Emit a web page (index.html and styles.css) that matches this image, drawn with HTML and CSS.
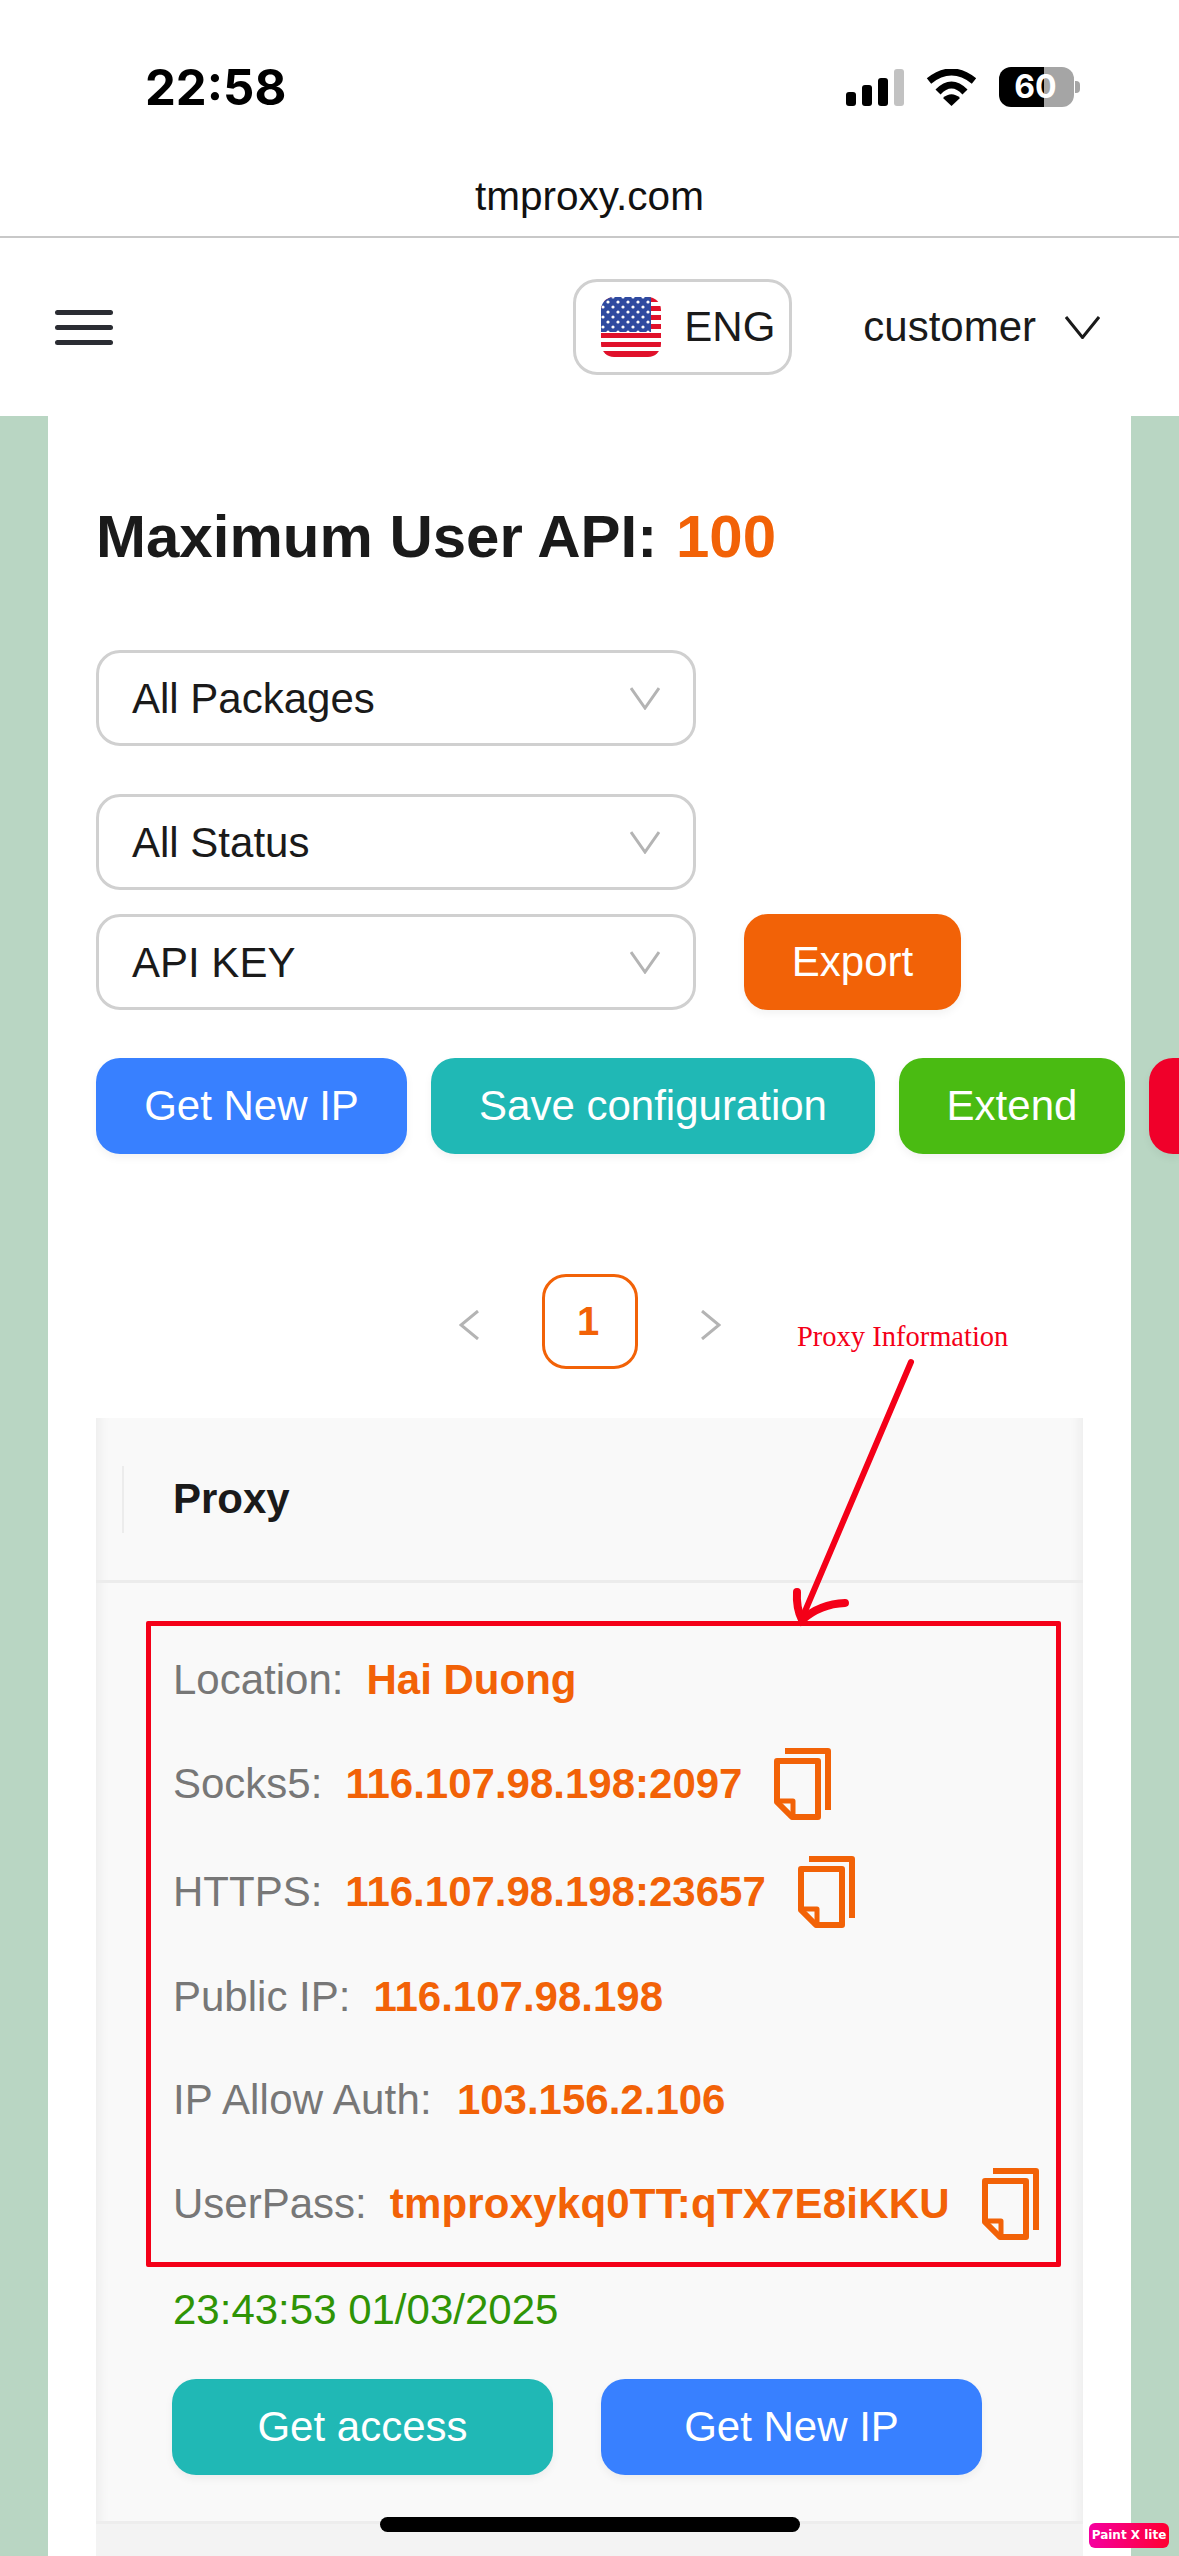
FILE: index.html
```html
<!DOCTYPE html>
<html lang="en">
<head>
<meta charset="UTF-8" />
<title>tmproxy.com</title>
<link rel="stylesheet" href="styles.css">
</head>
<body>

<!-- Status bar -->
<div class="status-bar">
  <span class="clock">22:58</span>
  <div class="status-icons">
    <div class="signal">
      <span class="bar bar-1"></span>
      <span class="bar bar-2"></span>
      <span class="bar bar-3"></span>
      <span class="bar bar-4"></span>
    </div>
    <svg class="wifi" viewBox="0 0 51 37">
      <path d="M3 12 Q25.5 -6 48 12" fill="none" stroke="#000" stroke-width="7"/>
      <path d="M12 23 Q25.5 9 39 23" fill="none" stroke="#000" stroke-width="7"/>
      <path d="M17 29 Q25.5 21.5 34 29 L25.5 37 Z" fill="#000"/>
    </svg>
    <div class="battery">
      <span class="battery-level">60</span>
      <span class="battery-nub"></span>
    </div>
  </div>
</div>

<div class="url-bar">tmproxy.com</div>

<!-- Site header -->
<header class="site-header">
  <div class="burger">
    <span></span><span></span><span></span>
  </div>
  <div class="lang-box">
    <svg class="flag" viewBox="0 0 60 60">
      <defs>
        <clipPath id="flagClip"><rect width="60" height="60" rx="13"/></clipPath>
        <pattern id="stars" width="10" height="10" patternUnits="userSpaceOnUse" x="4" y="2">
          <circle cx="3" cy="3" r="1.6" fill="#fff"/>
          <circle cx="8" cy="8" r="1.6" fill="#fff"/>
        </pattern>
      </defs>
      <g clip-path="url(#flagClip)">
        <rect width="60" height="60" fill="#fff"/>
        <rect y="0" width="60" height="5" fill="#e0112b"/>
        <rect y="9" width="60" height="5" fill="#e0112b"/>
        <rect y="18" width="60" height="5" fill="#e0112b"/>
        <rect y="27" width="60" height="5" fill="#e0112b"/>
        <rect y="36" width="60" height="5" fill="#e0112b"/>
        <rect y="45" width="60" height="5" fill="#e0112b"/>
        <rect y="54" width="60" height="6" fill="#e0112b"/>
        <rect width="50" height="35" fill="#2f4aa0"/>
        <rect width="50" height="35" fill="url(#stars)"/>
      </g>
    </svg>
    <span>ENG</span>
  </div>
  <div class="user-menu">
    <span>customer</span>
    <svg class="chevron-down dark" viewBox="0 0 35 23"><path d="M1 1 L17.5 21.5 L34 1" /></svg>
  </div>
</header>

<div class="page">
  <main class="card">
    <h1 class="title">Maximum User API: <span class="accent">100</span></h1>

    <div class="select first">
      <span>All Packages</span>
      <svg class="chevron-down" viewBox="0 0 30 23"><path d="M1 1 L15 21 L29 1" /></svg>
    </div>

    <div class="select second">
      <span>All Status</span>
      <svg class="chevron-down" viewBox="0 0 30 23"><path d="M1 1 L15 21 L29 1" /></svg>
    </div>

    <div class="export-row">
      <div class="select">
        <span>API KEY</span>
        <svg class="chevron-down" viewBox="0 0 30 23"><path d="M1 1 L15 21 L29 1" /></svg>
      </div>
      <button class="btn orange export">Export</button>
    </div>

    <div class="actions">
      <button class="btn blue new-ip">Get New IP</button>
      <button class="btn teal save">Save configuration</button>
      <button class="btn green extend">Extend</button>
      <button class="btn red delete"></button>
    </div>

    <div class="pagination">
      <svg class="page-arrow" viewBox="0 0 20 30"><path d="M19 1 L2 15 L19 29" /></svg>
      <span class="page-num">1</span>
      <svg class="page-arrow" viewBox="0 0 20 30"><path d="M1 1 L18 15 L1 29" /></svg>
    </div>

    <section class="proxy-table">
      <div class="table-head">
        <span class="head-sep"></span>
        <span class="head-title">Proxy</span>
      </div>

      <div class="table-body">
        <div class="info-box">
          <div class="info-row row-location">
            <span class="label">Location:</span><span class="value">Hai Duong</span>
          </div>
          <div class="info-row row-socks">
            <span class="label">Socks5:</span><span class="value">116.107.98.198:2097</span>
            <svg class="copy" viewBox="0 0 57 72"><use href="#copyIcon"/></svg>
          </div>
          <div class="info-row row-https">
            <span class="label">HTTPS:</span><span class="value">116.107.98.198:23657</span>
            <svg class="copy" viewBox="0 0 57 72"><use href="#copyIcon"/></svg>
          </div>
          <div class="info-row row-public">
            <span class="label">Public IP:</span><span class="value">116.107.98.198</span>
          </div>
          <div class="info-row row-allow">
            <span class="label">IP Allow Auth:</span><span class="value">103.156.2.106</span>
          </div>
          <div class="info-row row-user">
            <span class="label">UserPass:</span><span class="value">tmproxykq0TT:qTX7E8iKKU</span>
            <svg class="copy" viewBox="0 0 57 72"><use href="#copyIcon"/></svg>
          </div>
        </div>

        <div class="date">23:43:53 01/03/2025</div>

        <div class="row-buttons">
          <button class="btn teal wide">Get access</button>
          <button class="btn blue wide">Get New IP</button>
        </div>
      </div>
      <div class="table-foot"></div>
    </section>
  </main>
</div>

<!-- Annotation drawn over the screenshot -->
<span class="note">Proxy Information</span>
<svg class="note-arrow" viewBox="0 0 1179 2556">
  <path d="M911 1362 L803 1616" fill="none" stroke="#f40018" stroke-width="6" stroke-linecap="round"/>
  <path d="M797 1592 Q796 1608 802 1620 Q820 1604 845 1603" fill="none" stroke="#f40018" stroke-width="8" stroke-linecap="round"/>
</svg>

<div class="home-bar"></div>
<div class="paint-badge">Paint X lite</div>

<svg width="0" height="0" class="defs">
  <defs>
    <g id="copyIcon" fill="none" stroke="#f26207" stroke-width="6">
      <path d="M11 3 H54 V62" stroke-linejoin="round"/>
      <path d="M3 13 H44 V69 H18 L3 54 Z" stroke-linejoin="round"/>
      <path d="M3 53 H19 V69" stroke-linejoin="round" stroke-width="5"/>
    </g>
  </defs>
</svg>

</body>
</html>
```

FILE: styles.css
```css
* {
  box-sizing: border-box;
}

html, body {
  margin: 0;
  height: 2556px;
  overflow: hidden;
}

body {
  position: relative;
  width: 1179px;
  background: #fff;
  font-family: "Liberation Sans", Arial, sans-serif;
  font-size: 42px;
  color: #1a1a1a;
}

/* Status bar */
.status-bar {
  height: 150px;
  display: flex;
  justify-content: space-between;
  align-items: flex-start;
  padding: 60px 105px 0 145px;
}
.clock {
  font-family: Inter, sans-serif;
  font-weight: 700;
  font-size: 49px;
  line-height: 56px;
  color: #000;
}
.status-icons {
  display: flex;
  align-items: center;
  gap: 22px;
  padding-top: 7px;
}
.signal {
  display: flex;
  align-items: flex-end;
  gap: 6px;
  height: 37px;
}
.bar {
  width: 10px;
  border-radius: 3px;
  background: #000;
}
.bar-1 { height: 14px; }
.bar-2 { height: 21px; }
.bar-3 { height: 28px; }
.bar-4 { height: 37px; background: #c2c2c2; }
.wifi {
  width: 51px;
  height: 37px;
}
.battery {
  position: relative;
  width: 75px;
  height: 40px;
  display: flex;
  align-items: center;
  justify-content: center;
  padding-right: 2px;
  border-radius: 12px;
  background: linear-gradient(to right, #000 60%, #a5a5a5 60%);
}
.battery-level {
  font-family: Inter, sans-serif;
  font-weight: 700;
  font-size: 32px;
  line-height: 40px;
  color: #fff;
}
.battery-nub {
  position: absolute;
  right: -6px;
  top: 14px;
  width: 5px;
  height: 12px;
  border-radius: 0 4px 4px 0;
  background: #a5a5a5;
}

.url-bar {
  height: 88px;
  border-bottom: 2px solid #c8c8c8;
  text-align: center;
  font-size: 40.5px;
  line-height: 92px;
  color: #111;
}

/* Site header */
.site-header {
  height: 178px;
  display: flex;
  align-items: center;
  padding: 0 79px 0 55px;
}
.burger {
  width: 58px;
  display: flex;
  flex-direction: column;
  gap: 10px;
  margin-right: auto;
}
.burger span {
  display: block;
  height: 5px;
  border-radius: 3px;
  background: #2b2d33;
}
.lang-box {
  width: 219px;
  height: 96px;
  display: flex;
  align-items: center;
  gap: 23px;
  padding-left: 25px;
  border: 3px solid #d0d0d0;
  border-radius: 24px;
}
.flag {
  width: 60px;
  height: 60px;
}
.user-menu {
  display: flex;
  align-items: center;
  gap: 29px;
  margin-left: 71px;
}
.chevron-down {
  width: 30px;
  height: 23px;
  fill: none;
  stroke: #b4b4b4;
  stroke-width: 3;
}
.chevron-down.dark {
  width: 35px;
  stroke: #1a1a1a;
}

/* Page */
.page {
  height: 2140px;
  padding: 0 48px;
  background: #b9d6c3;
}
.card {
  height: 100%;
  padding: 87px 48px 0 48px;
  background: #fff;
}
.title {
  margin: 0 0 79px;
  font-size: 60px;
  font-weight: 700;
  line-height: 68px;
  white-space: nowrap;
}
.accent {
  margin-left: 2px;
  color: #f26207;
}

.select {
  width: 600px;
  height: 96px;
  display: flex;
  align-items: center;
  justify-content: space-between;
  padding: 0 33px;
  border: 3px solid #d0d0d0;
  border-radius: 24px;
  background: #fff;
}
.select span {
  padding-top: 2px;
}
.select.first {
  margin-bottom: 48px;
}
.select.second {
  margin-bottom: 24px;
}
.export-row {
  display: flex;
  gap: 48px;
  margin-bottom: 48px;
}

.btn {
  height: 96px;
  padding: 0;
  border: none;
  border-radius: 24px;
  font-family: inherit;
  font-size: 42px;
  color: #fff;
  box-shadow: 0 4px 8px rgba(0, 0, 0, 0.05);
  flex-shrink: 0;
}
.orange { background: #f26207; }
.blue { background: #3880ff; }
.teal { background: #20b8b5; }
.green { background: #4abb12; }
.red { background: #f0002a; }

.export { width: 217px; }
.new-ip { width: 311px; }
.save { width: 444px; }
.extend { width: 226px; }
.delete { width: 30px; border-radius: 24px 0 0 24px; }

.actions {
  display: flex;
  gap: 24px;
  margin-bottom: 120px;
}

.pagination {
  display: flex;
  align-items: center;
  justify-content: center;
  gap: 63px;
  width: 987px;
  margin-bottom: 49px;
}
.page-arrow {
  width: 20px;
  height: 30px;
  margin-top: 6px;
  fill: none;
  stroke: #b4b4b4;
  stroke-width: 3;
}
.page-num {
  width: 96px;
  height: 95px;
  display: flex;
  align-items: center;
  justify-content: center;
  padding-right: 3px;
  border: 3px solid #f26207;
  border-radius: 24px;
  font-size: 40px;
  font-weight: 700;
  color: #f26207;
}

/* Proxy table */
.proxy-table {
  width: 987px;
  background: #f9f9f9;
  box-shadow: inset 14px 0 12px -10px rgba(0, 0, 0, 0.05), inset -14px 0 12px -10px rgba(0, 0, 0, 0.05);
}
.table-head {
  height: 165px;
  display: flex;
  align-items: center;
  padding-left: 26px;
  border-bottom: 3px solid #ececec;
}
.head-sep {
  width: 2px;
  height: 67px;
  background: #ececec;
}
.head-title {
  margin-left: 49px;
  font-weight: 700;
}
.table-body {
  height: 941px;
  padding: 38px 0 0 50px;
  border-bottom: 3px solid #ededed;
}
.info-box {
  width: 915px;
  height: 646px;
  margin-bottom: 20px;
  padding: 31px 0 0 22px;
  border: 5px solid #f40018;
  border-radius: 2px;
}
.info-row {
  display: flex;
  align-items: center;
  gap: 23px;
  color: #777;
}
.label {
  color: #777;
}
.value {
  font-weight: 700;
  color: #f26207;
}
.copy {
  width: 57px;
  height: 72px;
  margin-left: 9px;
}
.row-location { height: 46px; margin-bottom: 45px; }
.row-socks { height: 72px; margin-bottom: 36px; }
.row-https { height: 72px; margin-bottom: 46px; }
.row-public { height: 46px; margin-bottom: 57px; }
.row-allow { height: 46px; margin-bottom: 45px; gap: 25px; }
.row-allow .label { letter-spacing: 0.2px; }
.row-user { height: 72px; }
.row-user .value { letter-spacing: 0.2px; }

.date {
  margin: 0 0 46px 27px;
  line-height: 46px;
  color: #2f9406;
}
.row-buttons {
  display: flex;
  gap: 48px;
  margin-left: 26px;
}
.wide {
  width: 381px;
}
.table-foot {
  height: 40px;
  background: #f3f3f3;
}

/* Annotation */
.note {
  position: absolute;
  left: 797px;
  top: 1322px;
  font-family: "Liberation Serif", serif;
  font-size: 28.5px;
  line-height: 30px;
  color: #f40018;
}
.note-arrow {
  position: absolute;
  left: 0;
  top: 0;
  width: 1179px;
  height: 2556px;
  pointer-events: none;
}

.home-bar {
  position: absolute;
  left: 380px;
  top: 2517px;
  width: 420px;
  height: 15px;
  border-radius: 8px;
  background: #000;
}
.paint-badge {
  position: absolute;
  left: 1089px;
  top: 2523px;
  width: 80px;
  height: 25px;
  border-radius: 6px;
  background: linear-gradient(to right, #f500a0, #ff0030);
  font-family: "DejaVu Sans", sans-serif;
  font-size: 12px;
  font-weight: 700;
  line-height: 25px;
  text-align: center;
  color: #fff;
}
.defs {
  position: absolute;
}
```
